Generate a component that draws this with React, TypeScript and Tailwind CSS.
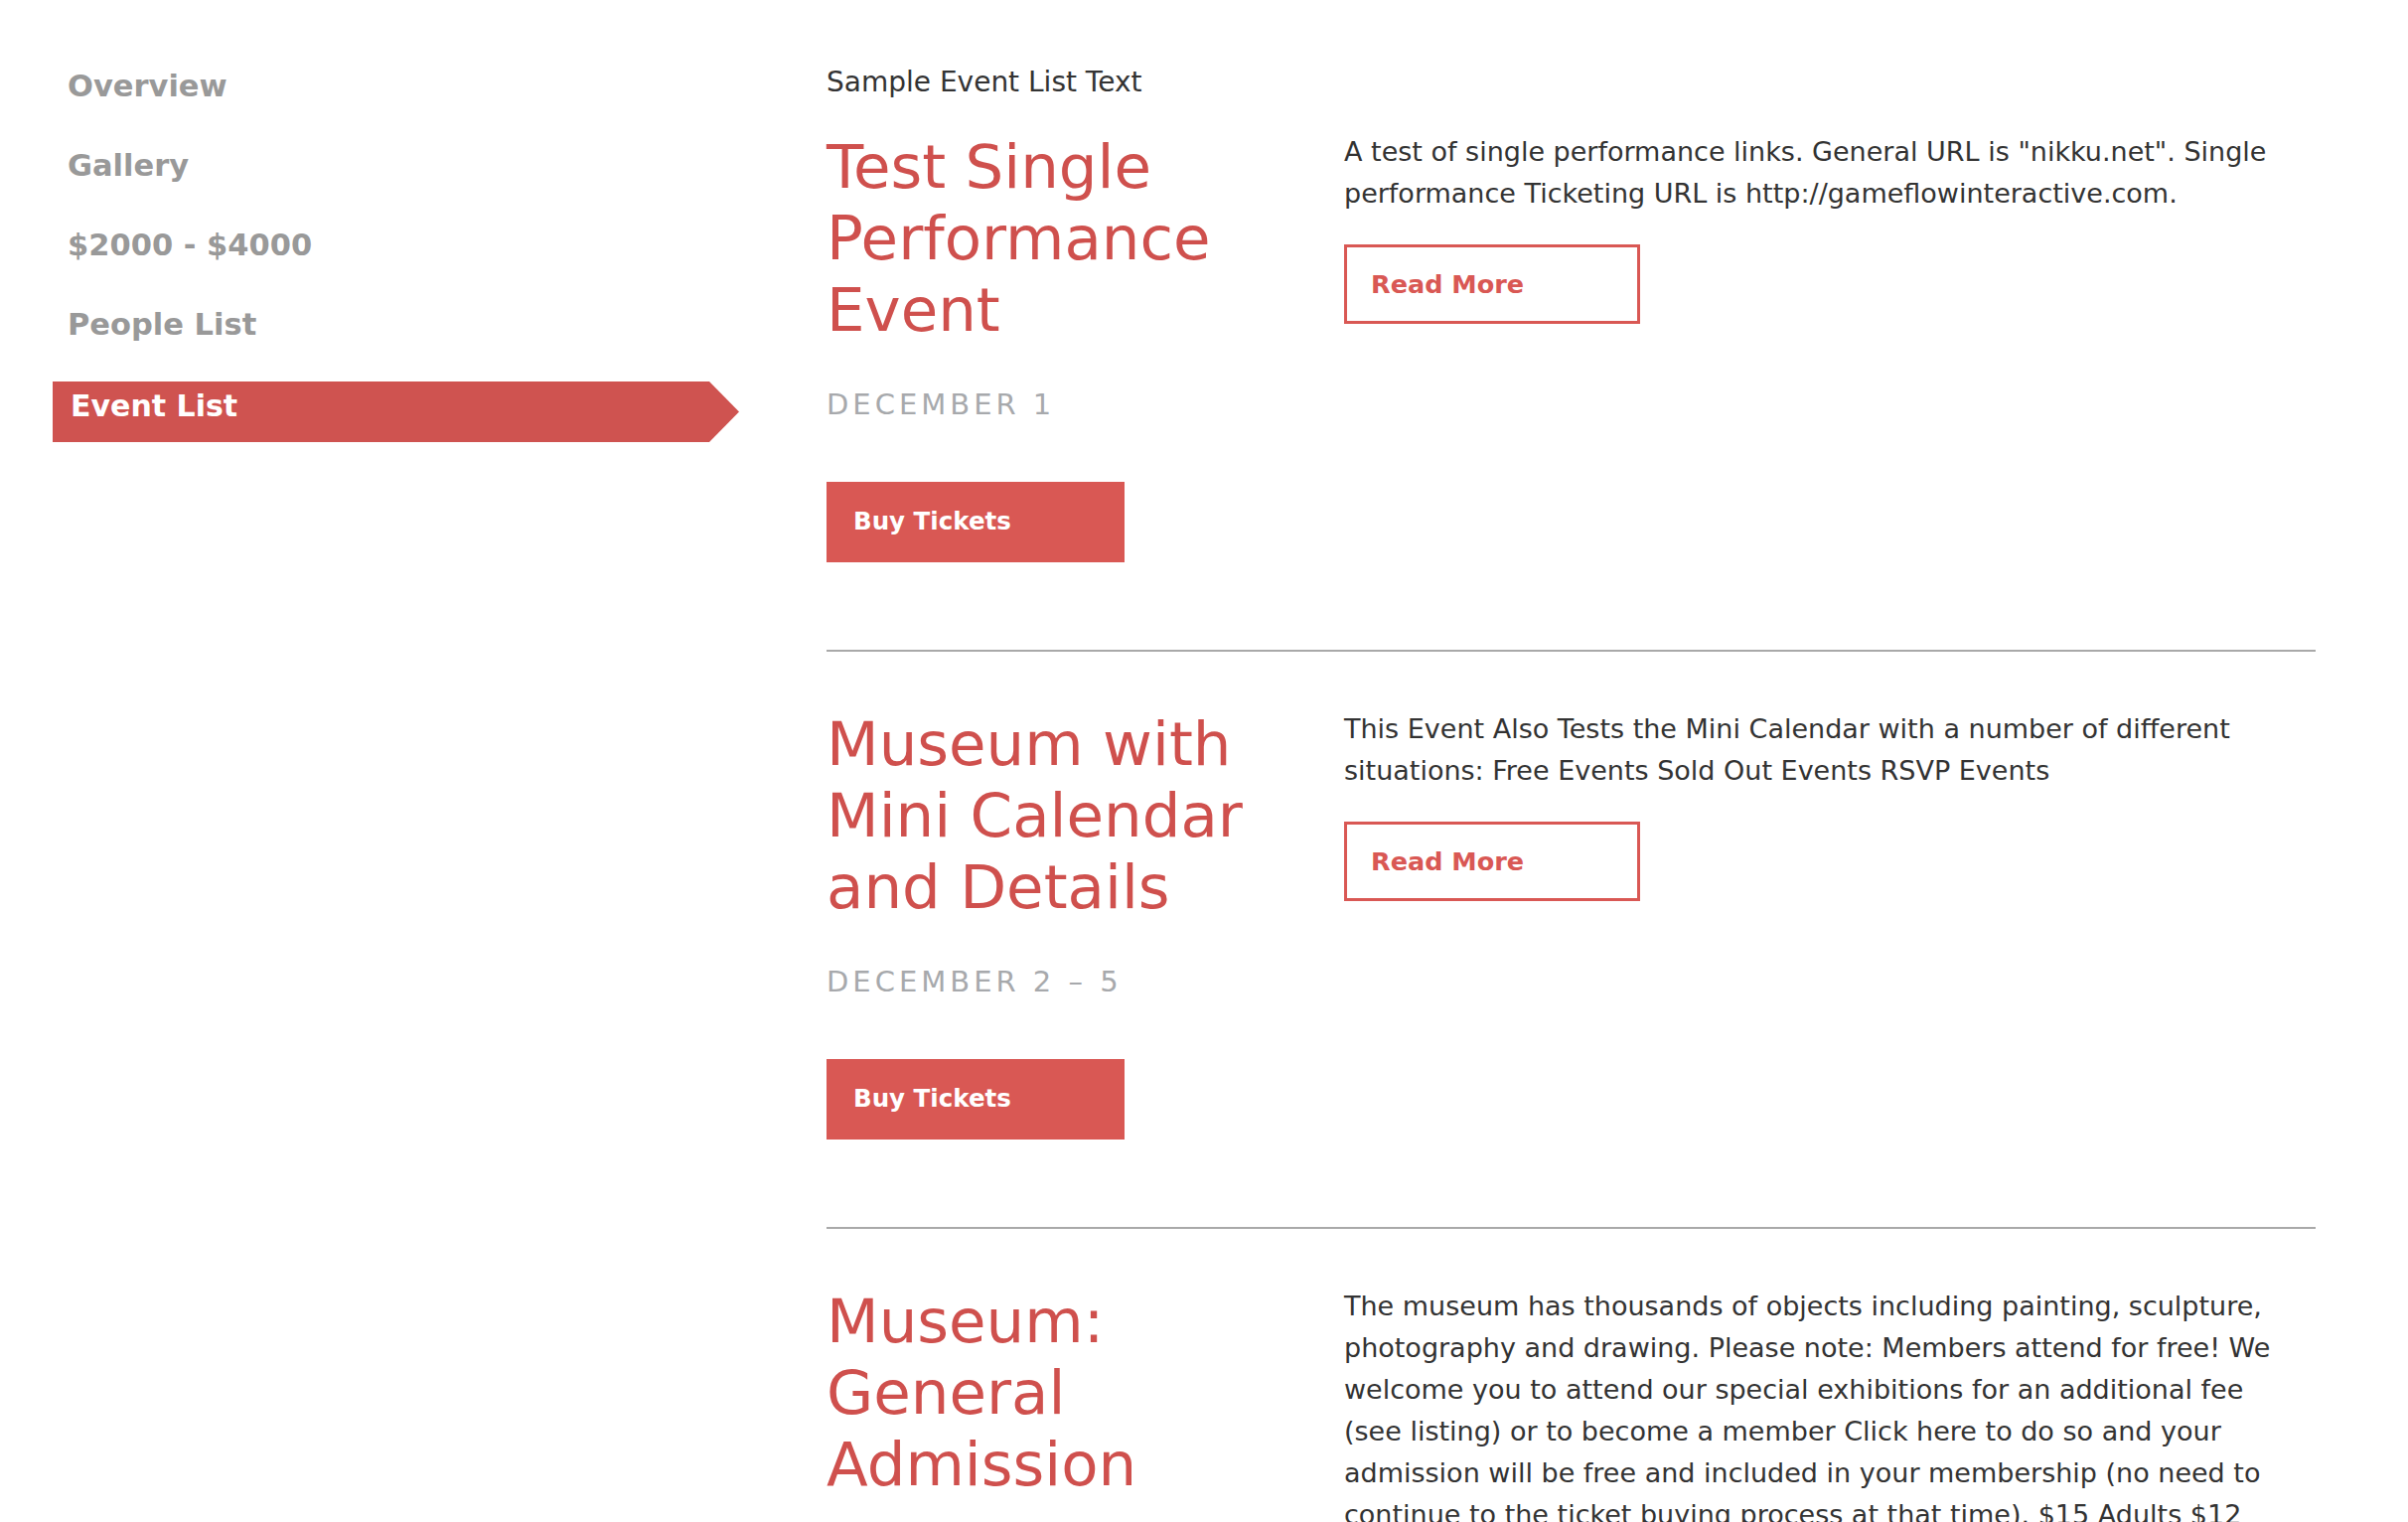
import React from "react";

type EventItem = {
  title: string;
  date: string;
  description: string;
};

const navItems = ["Overview", "Gallery", "$2000 - $4000", "People List", "Event List"];

const events: EventItem[] = [
  {
    title: "Test Single Performance Event",
    date: "December 1",
    description:
      'A test of single performance links. General URL is "nikku.net". Single performance Ticketing URL is http://gameflowinteractive.com.',
  },
  {
    title: "Museum with Mini Calendar and Details",
    date: "December 2 – 5",
    description:
      "This Event Also Tests the Mini Calendar with a number of different situations: Free Events Sold Out Events RSVP Events",
  },
  {
    title: "Museum: General Admission",
    date: "Ongoing",
    description:
      "The museum has thousands of objects including painting, sculpture, photography and drawing. Please note: Members attend for free! We welcome you to attend our special exhibitions for an additional fee (see listing) or to become a member Click here to do so and your admission will be free and included in your membership (no need to continue to the ticket buying process at that time).   $15 Adults $12 Seniors $10 Students",
  },
];

const Sidebar: React.FC<{ active: string }> = ({ active }) => {
  return (
    <nav className="flex w-[832px] shrink-0 flex-col gap-[19px] pl-[53px] pt-[56px]">
      {navItems.map((item) =>
        item === active ? (
          <div key={item} className="mt-[8px] flex h-[61px] w-[691px]">
            <div className="flex h-full w-[661px] items-center bg-[#cf5350] pb-[12px] pl-[18px] text-[30px] font-bold text-white">
              {item}
            </div>
            <svg width="30" height="61" viewBox="0 0 30 61" className="block">
              <polygon points="0,0 30,30.5 0,61" fill="#cf5350" />
            </svg>
          </div>
        ) : (
          <a
            key={item}
            href="#"
            className="flex h-[61px] items-center pl-[15px] text-[30.5px] font-bold text-[#999999]"
          >
            {item}
          </a>
        ),
      )}
    </nav>
  );
};

const EventRow: React.FC<{ event: EventItem; last: boolean }> = ({ event, last }) => {
  return (
    <div className={last ? "pt-[57px]" : "border-b-2 border-[#a9a9a9] pb-[88px] pt-[57px] first:pt-0"}>
      <div className="flex">
        <div className="w-[521px] shrink-0 pr-[50px]">
          <h2 className="text-[61px] font-normal leading-[72px] text-[#cf504d]">{event.title}</h2>
          <div className="mt-[41px] text-[29px] uppercase leading-[36px] tracking-[4px] text-[#a7a9ac]">
            {event.date}
          </div>
          <a
            href="#"
            className="mt-[60px] flex h-[81px] w-[300px] items-center bg-[#d95854] pl-[27px] text-[24.5px] font-bold text-white"
          >
            Buy Tickets
          </a>
        </div>
        <div className="flex-1">
          {/* keep lines close to the original wrap */}
          <p className="pr-[28px] text-[27px] leading-[42px] text-[#333333]">{event.description}</p>
          <a
            href="#"
            className="mt-[30px] flex h-[80px] w-[298px] items-center border-[3px] border-[#d95854] pl-[24px] text-[25.5px] font-bold text-[#d95854]"
          >
            Read More
          </a>
        </div>
      </div>
    </div>
  );
};

export default function App() {
  return (
    <div className="flex h-screen overflow-hidden bg-white font-['DejaVu_Sans',sans-serif]">
      <Sidebar active="Event List" />
      <main className="w-[1499px] pt-[65px]">
        <div className="text-[28px] leading-[36px] text-[#333333]">Sample Event List Text</div>
        <div className="mt-[31px]">
          {events.map((event, i) => (
            <EventRow key={event.title} event={event} last={i === events.length - 1} />
          ))}
        </div>
      </main>
    </div>
  );
}
